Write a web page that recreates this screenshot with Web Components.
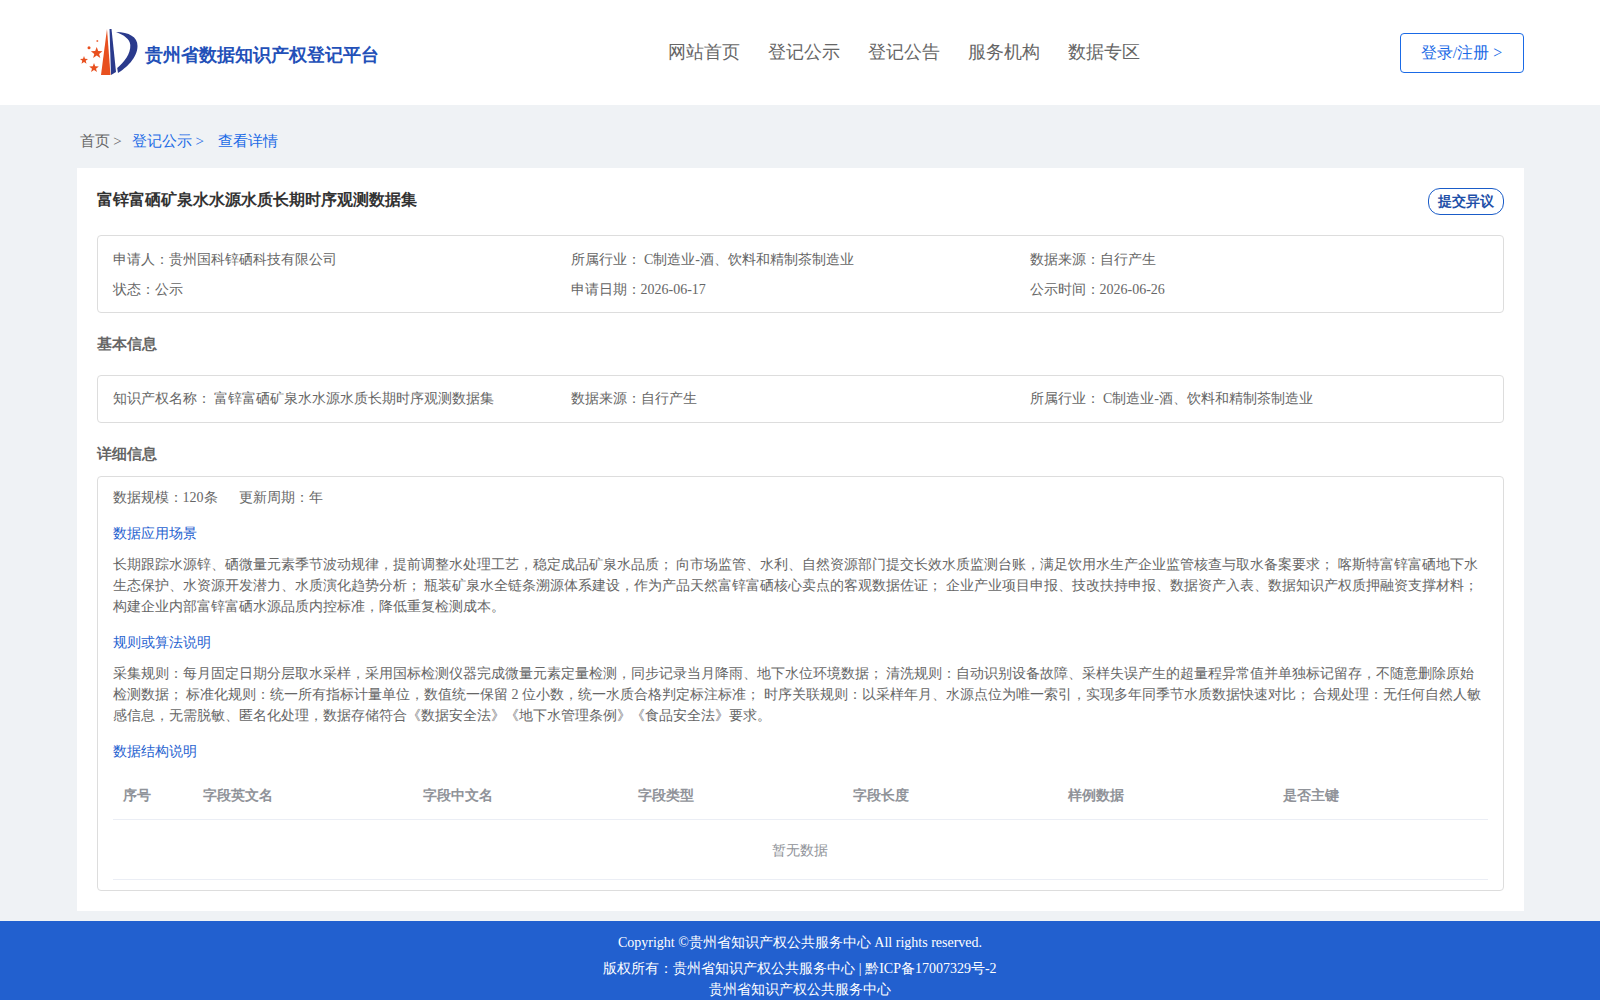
<!DOCTYPE html>
<html><head><meta charset="utf-8"><style>
html,body{margin:0;padding:0;background:#eff2f5;font-family:"Liberation Serif",serif;font-size:14px;color:#666;height:1000px;overflow:hidden}
</style></head><body>
<site-header></site-header>
<bread-crumbs></bread-crumbs>
<detail-card>
<h-title slot="title">富锌富硒矿泉水水源水质长期时序观测数据集</h-title>
</detail-card>
<site-footer></site-footer>
<script>
function def(name,html){customElements.define(name,class extends HTMLElement{constructor(){super();this.attachShadow({mode:'open'}).innerHTML=html;}});}
def('h-title','<style>:host{display:block;font-size:16px;font-weight:700;color:#333;line-height:24px}</style><slot></slot>');
def('site-header',`<style>
:host{display:block;height:105px;background:#fff}
.in{width:1447px;margin:0 auto;height:100%;display:flex;align-items:flex-start;position:relative}
.logo{display:flex;align-items:flex-start;margin-top:25px;width:500px}
.logo svg{display:block;width:68px;height:56px;flex:none}
.logo b{font-size:18px;color:#2350b8;margin-top:17px;line-height:26px}
nav{display:flex;gap:28px;font-size:18px;color:#666;margin:39px 0 0 91px;line-height:26px}
a.btn{margin-left:auto;margin-top:33px;width:122px;height:37px;padding-top:1px;border:1px solid #1a6ae6;border-radius:4px;color:#1a6ae6;font-size:16px;display:flex;align-items:center;justify-content:center}
</style><div class="in"><div class="logo"><svg viewBox="77 25 68 56">
<path d="M101 75 L107 29 L110.5 75Z" fill="#e8501f"/>
<path d="M111 75 L109.5 29 L111.5 29 L116 72Z" fill="#2a3a8c"/>
<path d="M116 32 C129 32 137.5 37 137.5 46 C137.5 58 126 68 118 73 L117.2 68 C124 62 130.8 54 130.3 45 C129.8 39 124 35 116 32Z" fill="#2a3a8c"/>
<polygon fill="#e8501f" points="96.7,47 98.2,51 102.5,51.2 99.1,53.9 100.3,58 96.7,55.6 93.1,58 94.3,53.9 90.9,51.2 95.2,51"/>
<polygon fill="#e8501f" points="84,56 85,58.8 88,59 85.7,60.8 86.5,63.7 84,62 81.5,63.7 82.3,60.8 80,59 83,58.8"/>
<polygon fill="#e8501f" points="94,63 95.2,66.3 98.8,66.5 96,68.7 97,72.1 94,70.1 91,72.1 92,68.7 89.2,66.5 92.8,66.3"/>
<circle cx="89" cy="47.7" r="1.5" fill="#e8501f"/><circle cx="97.3" cy="41" r="1" fill="#e8501f" opacity=".8"/>
</svg><b>贵州省数据知识产权登记平台</b></div>
<nav><span>网站首页</span><span>登记公示</span><span>登记公告</span><span>服务机构</span><span>数据专区</span></nav>
<a class="btn">登录/注册 &gt;</a></div>`);
def('bread-crumbs',`<style>:host{display:block;height:63px}
.in{width:1447px;margin:0 auto;padding:26px 3px 0;box-sizing:border-box;font-size:15px;line-height:20px;display:flex}
span{color:#666}a{color:#1a6ae6}</style><div class="in"><span>首页 &gt;</span><a style="margin-left:10px">登记公示 &gt;</a><a style="margin-left:14px">查看详情</a></div>`);
def('info-box',`<style>:host{display:block;border:1px solid #ddd;border-radius:4px;box-sizing:border-box}</style><slot></slot>`);
def('info-grid',`<style>:host{display:grid;grid-template-columns:458px 459px 1fr;padding:9px 15px 7px;line-height:30px;color:#666}</style><slot></slot>`);
def('sec-head',`<style>:host{display:block;font-size:15px;font-weight:700;color:#666;line-height:20px}</style><slot></slot>`);
def('sub-head',`<style>:host{display:block;color:#1f62d0;line-height:20px;margin:0}</style><slot></slot>`);
def('para-text',`<style>:host{display:block;color:#666;line-height:21px}</style><slot></slot>`);
def('field-table',`<style>:host{display:block;margin-top:11px}
.r{display:grid;grid-template-columns:80px 220px 215px 215px 215px 215px 1fr;height:46px;align-items:center;border-bottom:1px solid #ebeef5;font-weight:700;color:#909399}
.r span{padding-left:10px}
.e{height:57px;padding-top:2px;display:flex;align-items:center;justify-content:center;border-bottom:1px solid #ebeef5;color:#909399}
</style><div class="r"><span>序号</span><span>字段英文名</span><span>字段中文名</span><span>字段类型</span><span>字段长度</span><span>样例数据</span><span>是否主键</span></div><div class="e">暂无数据</div>`);
def('detail-card',`<style>:host{display:block;width:1447px;margin:0 auto;background:#fff;height:743px;padding:20px;box-sizing:border-box}
.t{display:flex;justify-content:space-between;align-items:flex-start;height:47px}
.b{width:76px;height:27px;box-sizing:border-box;border:1px solid #1a5cc8;border-radius:12px;color:#1f50a8;font-weight:700;display:flex;align-items:center;justify-content:center}
.d{padding:6px 15px 10px}
.m{line-height:30px;display:flex;gap:21px}
sub-head{margin-top:16px}sub-head.f{margin-top:11px}para-text{margin-top:10px}
</style><div class="t"><slot name="title"></slot><div class="b">提交异议</div></div>
<info-box><info-grid><span>申请人：贵州国科锌硒科技有限公司</span><span>所属行业： C制造业-酒、饮料和精制茶制造业</span><span>数据来源：自行产生</span><span>状态：公示</span><span>申请日期：2026-06-17</span><span>公示时间：2026-06-26</span></info-grid></info-box>
<sec-head style="margin:21px 0 21px">基本信息</sec-head>
<info-box><info-grid style="padding:8px 15px"><span>知识产权名称： 富锌富硒矿泉水水源水质长期时序观测数据集</span><span>数据来源：自行产生</span><span>所属行业： C制造业-酒、饮料和精制茶制造业</span></info-grid></info-box>
<sec-head style="margin:21px 0 12px">详细信息</sec-head>
<info-box><div class="d"><div class="m"><span>数据规模：120条</span><span>更新周期：年</span></div>
<sub-head class="f">数据应用场景</sub-head>
<para-text>长期跟踪水源锌、硒微量元素季节波动规律，提前调整水处理工艺，稳定成品矿泉水品质； 向市场监管、水利、自然资源部门提交长效水质监测台账，满足饮用水生产企业监管核查与取水备案要求； 喀斯特富锌富硒地下水生态保护、水资源开发潜力、水质演化趋势分析； 瓶装矿泉水全链条溯源体系建设，作为产品天然富锌富硒核心卖点的客观数据佐证； 企业产业项目申报、技改扶持申报、数据资产入表、数据知识产权质押融资支撑材料； 构建企业内部富锌富硒水源品质内控标准，降低重复检测成本。</para-text>
<sub-head>规则或算法说明</sub-head>
<para-text>采集规则：每月固定日期分层取水采样，采用国标检测仪器完成微量元素定量检测，同步记录当月降雨、地下水位环境数据； 清洗规则：自动识别设备故障、采样失误产生的超量程异常值并单独标记留存，不随意删除原始检测数据； 标准化规则：统一所有指标计量单位，数值统一保留 2 位小数，统一水质合格判定标注标准； 时序关联规则：以采样年月、水源点位为唯一索引，实现多年同季节水质数据快速对比； 合规处理：无任何自然人敏感信息，无需脱敏、匿名化处理，数据存储符合《数据安全法》《地下水管理条例》《食品安全法》要求。</para-text>
<sub-head>数据结构说明</sub-head>
<field-table></field-table></div></info-box>`);
def('site-footer',`<style>:host{display:block;margin-top:10px;background:#2260cf;height:79px;color:#fff;text-align:center;overflow:hidden}
div{line-height:21px}</style><div style="margin-top:11px">Copyright ©贵州省知识产权公共服务中心 All rights reserved.</div><div style="margin-top:5px">版权所有：贵州省知识产权公共服务中心 | 黔ICP备17007329号-2</div><div>贵州省知识产权公共服务中心</div>`);
</script></body></html>
